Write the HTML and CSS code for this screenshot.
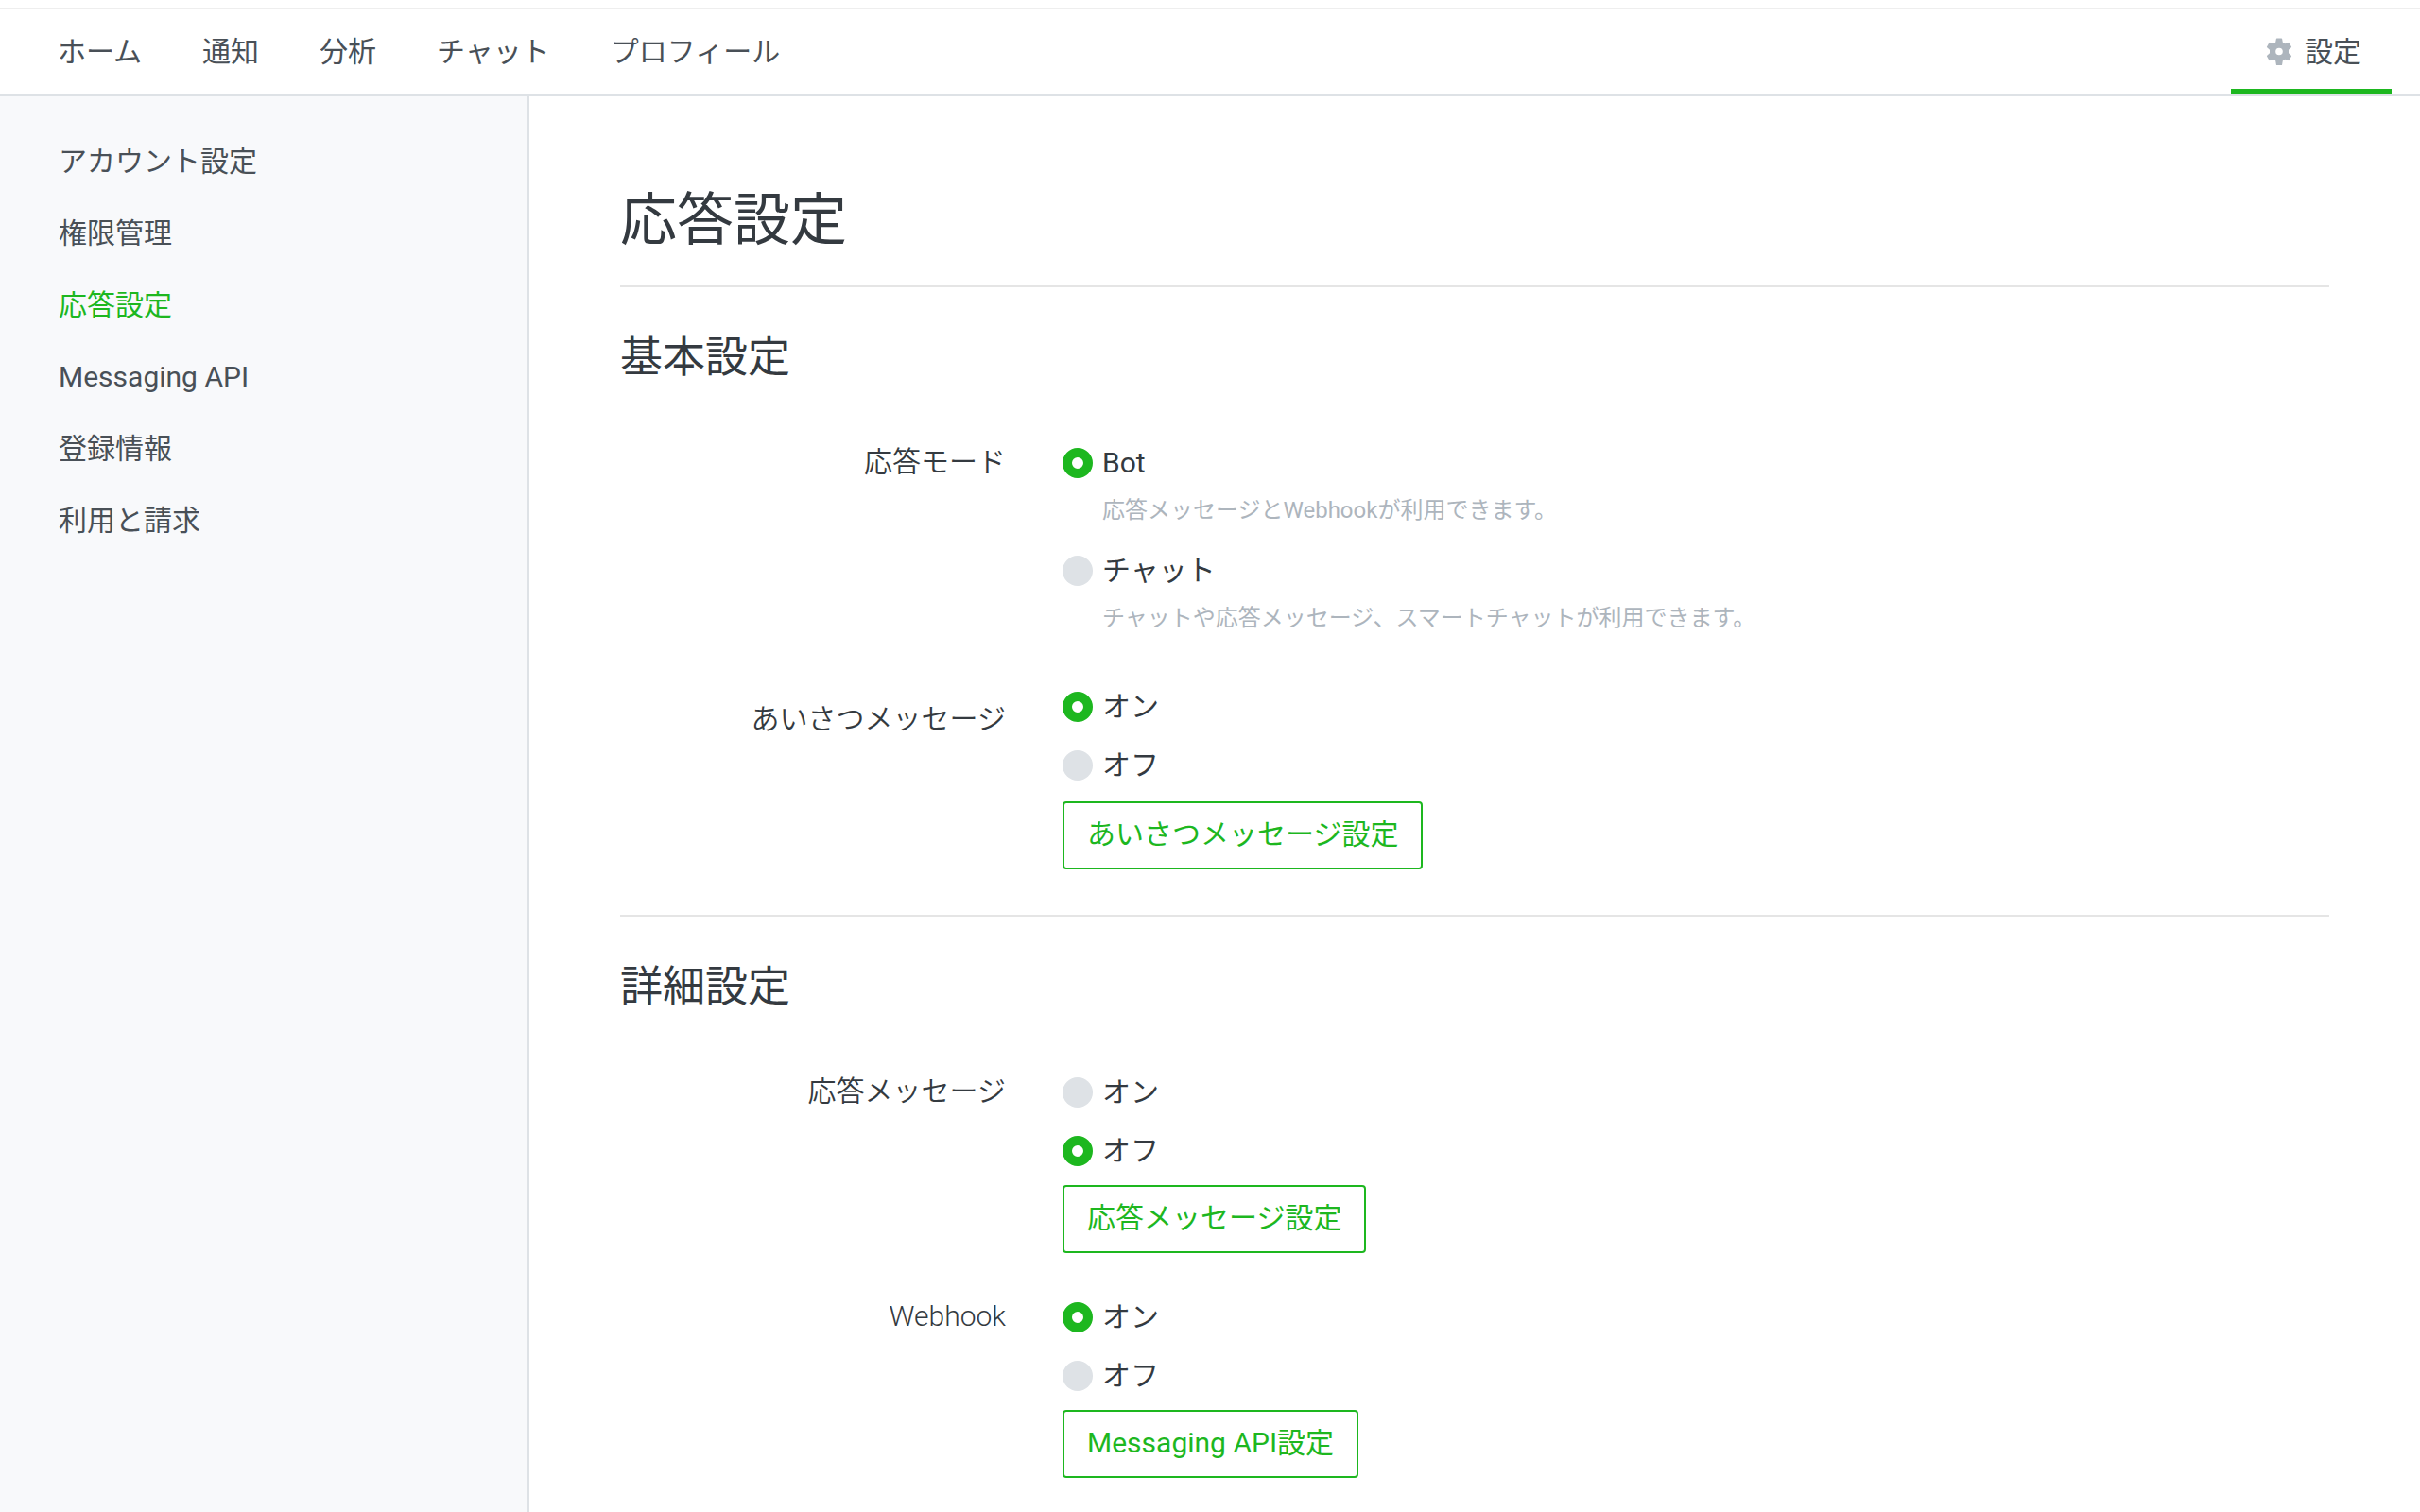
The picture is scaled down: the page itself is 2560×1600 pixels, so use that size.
FILE: index.html
```html
<!DOCTYPE html>
<html lang="ja">
<head>
<meta charset="utf-8">
<meta name="viewport" content="width=device-width, initial-scale=1">
<title>応答設定</title>
<link rel="stylesheet" href="styles.css">
</head>
<body>
<header class="topbar">
  <nav class="topnav" aria-label="メイン">
    <a href="#">ホーム</a>
    <a href="#">通知</a>
    <a href="#">分析</a>
    <a href="#">チャット</a>
    <a href="#">プロフィール</a>
  </nav>
  <a class="settings-tab" href="#" aria-current="page">
    <svg class="gear" viewBox="0 0 30 30" aria-hidden="true">
      <path fill-rule="evenodd" d="M12.600 .5h4.800q.6 0 .7.6l.7 3.700 2.400 1.400 3.500-1.300q.6-.2.900.3l2.400 4.200q.3.500-.2.900L25 12.800v3.400l2.800 2.500q.5.400.2.900l-2.400 4.200q-.3.500-.9.300l-3.500-1.300-2.400 1.400-.7 4.200q-.1.600-.7.600h-4.800q-.6 0-.7-.6l-.7-4.200-2.400-1.400-3.500 1.300q-.6.2-.9-.3L2 19.600q-.3-.5.2-.9L5 16.200v-3.400l-2.800-2.500q-.5-.4-.2-.9l2.400-4.200q.3-.5.9-.3l3.500 1.300 2.400-1.400.7-3.700q.1-.6.7-.6zM15 10.700a3.800 3.800 0 1 0 0 7.600a3.800 3.800 0 1 0 0-7.600z"/>
    </svg>
    設定
  </a>
</header>
<div class="page">
  <nav class="sidebar" aria-label="設定">
    <a href="#">アカウント設定</a>
    <a href="#">権限管理</a>
    <a class="active" href="#" aria-current="page">応答設定</a>
    <a href="#">Messaging API</a>
    <a href="#">登録情報</a>
    <a href="#">利用と請求</a>
  </nav>
  <main class="content">
    <h1>応答設定</h1>
    <section class="section">
      <h2>基本設定</h2>
      <div class="groups">
        <div class="group" role="radiogroup" aria-labelledby="mode-label">
          <div class="group-label" id="mode-label">応答モード</div>
          <div class="options">
            <div class="option">
              <label class="choice"><input type="radio" name="mode" checked>Bot</label>
              <p class="hint">応答メッセージとWebhookが利用できます。</p>
            </div>
            <div class="option">
              <label class="choice"><input type="radio" name="mode">チャット</label>
              <p class="hint">チャットや応答メッセージ、スマートチャットが利用できます。</p>
            </div>
          </div>
        </div>
        <div class="group" role="radiogroup" aria-labelledby="greeting-label">
          <div class="group-label group-label-low" id="greeting-label">あいさつメッセージ</div>
          <div class="options">
            <label class="choice"><input type="radio" name="greeting" checked>オン</label>
            <label class="choice"><input type="radio" name="greeting">オフ</label>
            <button class="outline-button" type="button">あいさつメッセージ設定</button>
          </div>
        </div>
      </div>
    </section>
    <section class="section section-compact">
      <h2>詳細設定</h2>
      <div class="groups">
        <div class="group" role="radiogroup" aria-labelledby="reply-label">
          <div class="group-label" id="reply-label">応答メッセージ</div>
          <div class="options">
            <label class="choice"><input type="radio" name="reply">オン</label>
            <label class="choice"><input type="radio" name="reply" checked>オフ</label>
            <button class="outline-button" type="button">応答メッセージ設定</button>
          </div>
        </div>
        <div class="group" role="radiogroup" aria-labelledby="webhook-label">
          <div class="group-label group-label-latin" id="webhook-label">Webhook</div>
          <div class="options">
            <label class="choice"><input type="radio" name="webhook" checked>オン</label>
            <label class="choice"><input type="radio" name="webhook">オフ</label>
            <button class="outline-button" type="button">Messaging API設定</button>
          </div>
        </div>
      </div>
    </section>
  </main>
</div>
</body>
</html>
```
FILE: styles.css
```css
:root {
  --green: #1db71f;
  --ink: #343a40;
  --ink-soft: #495057;
  --muted: #adb5bd;
  --line: #dee2e6;
}

* {
  box-sizing: border-box;
}

body {
  display: flex;
  flex-direction: column;
  min-height: 100vh;
  margin: 0;
  background: #fff;
  color: var(--ink);
  font: 400 30px/44px Roboto, "Noto Sans CJK JP", sans-serif;
}

a {
  color: var(--ink-soft);
  text-decoration: none;
}

.topbar {
  display: flex;
  justify-content: space-between;
  height: 94px;
  margin-top: 8px;
  padding: 0 30px 0 61px;
  border-top: 2px solid #eee;
  border-bottom: 2px solid var(--line);
}

.topnav {
  display: flex;
  align-items: center;
  gap: 64px;
}

.settings-tab {
  display: flex;
  align-items: center;
  gap: 12px;
  padding: 6px 32px 0 36px;
  border-bottom: 6px solid var(--green);
}

.gear {
  width: 30px;
  height: 30px;
  fill: var(--muted);
}

.page {
  display: flex;
  flex: 1;
}

.sidebar {
  display: flex;
  flex: none;
  flex-direction: column;
  gap: 32px;
  width: 560px;
  padding: 47px 62px;
  border-right: 2px solid var(--line);
  background: #f8f9fb;
}

.sidebar .active {
  color: var(--green);
}

.content {
  flex: 1;
  padding: 92px 96px 0;
}

h1,
h2,
p {
  margin: 0;
  font-weight: 400;
}

h1 {
  padding-bottom: 28px;
  font-size: 60px;
  line-height: 80px;
}

.section {
  --button-gap: 14px;
  padding: 45px 0 48px;
  border-top: 2px solid #e5e5e5;
}

.section-compact {
  --button-gap: 12px;
  padding-bottom: 0;
}

h2 {
  margin-bottom: 57px;
  font-size: 45px;
  line-height: 60px;
}

.groups {
  display: grid;
  gap: 44px;
}

.group {
  display: grid;
  grid-template-columns: 408px 1fr;
  gap: 60px;
}

.group-label {
  font-weight: 350;
  line-height: 46px;
  text-align: right;
}

.group-label-low {
  padding-top: 14px;
}

.group-label-latin {
  font-weight: 300;
}

.options {
  display: flex;
  flex-direction: column;
  align-items: flex-start;
}

.choice {
  display: flex;
  align-items: center;
  gap: 10px;
  height: 48px;
  line-height: 48px;
}

.choice + .choice,
.option + .option {
  margin-top: 14px;
}

.choice input {
  width: 32px;
  height: 32px;
  margin: 0;
  border-radius: 50%;
  background: var(--line);
  appearance: none;
}

.choice input:checked {
  border: 10px solid var(--green);
  background: #fff;
}

.hint {
  padding: 2px 0 2px 42px;
  color: var(--muted);
  font-size: 24px;
  line-height: 48px;
}

.outline-button {
  height: 72px;
  margin: var(--button-gap) 0 0;
  padding: 0 24px 2px;
  border: 2px solid var(--green);
  border-radius: 4px;
  background: #fff;
  color: var(--green);
  font: inherit;
}
```
